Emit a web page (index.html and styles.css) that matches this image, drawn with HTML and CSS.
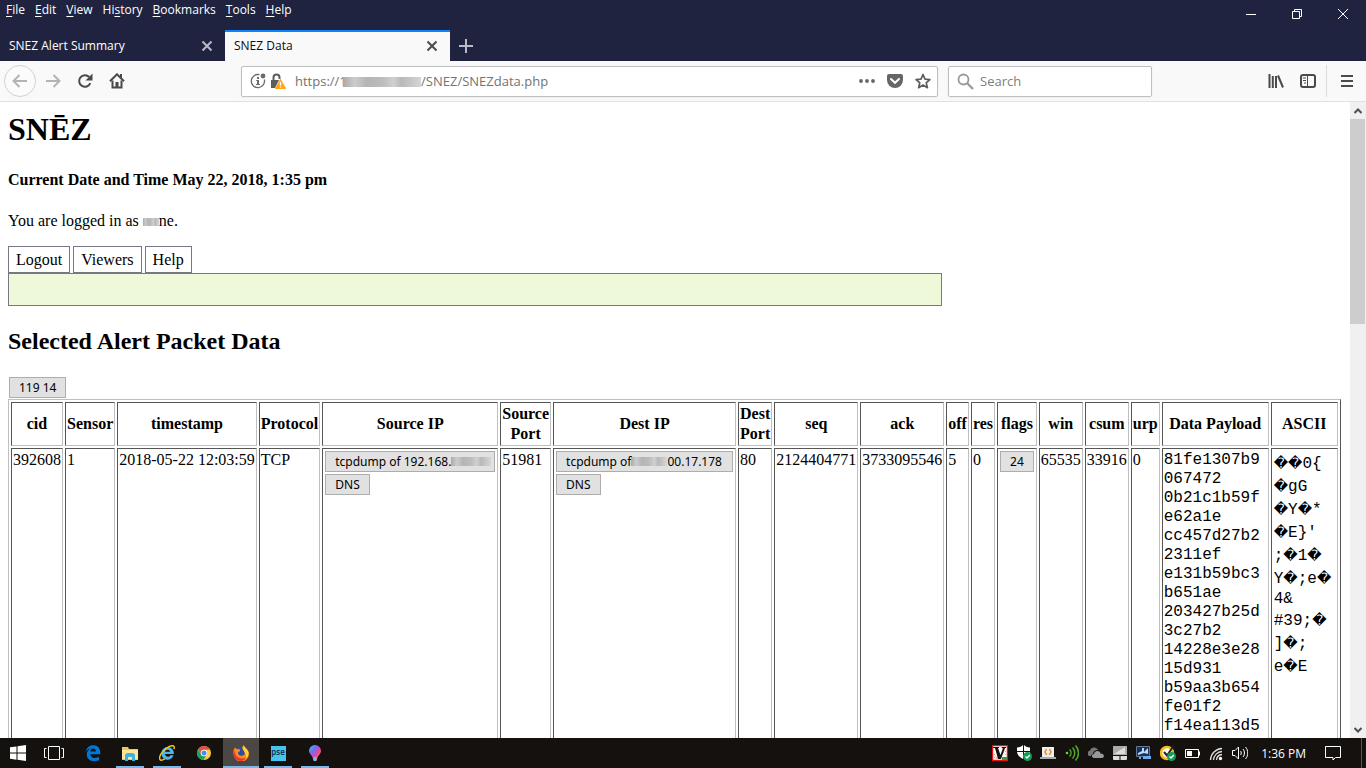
FILE: index.html
```html
<!DOCTYPE html>
<html lang="en">
<head>
    <meta charset="UTF-8"/>
    <meta name="viewport" content="width=device-width, initial-scale=1.0"/>
    <title>SNEZ Data</title>
    <link rel="stylesheet" href="styles.css">
</head>
<body>
<!-- Browser title bar: menu, window buttons, tabs -->
<header class="titlebar">
    <div class="menu-row">
        <nav class="menu">
            <button><u>F</u>ile</button>
            <button><u>E</u>dit</button>
            <button><u>V</u>iew</button>
            <button>Hi<u>s</u>tory</button>
            <button><u>B</u>ookmarks</button>
            <button><u>T</u>ools</button>
            <button><u>H</u>elp</button>
        </nav>
        <div class="window-buttons">
            <button aria-label="Minimize"><svg width="12" height="12" viewBox="0 0 12 12"><path d="M1 6.5h10"/></svg></button>
            <button aria-label="Restore"><svg width="12" height="12" viewBox="0 0 12 12"><path d="M1.500 3.500h7v7h-7zM3.500 3.500v-2h7v7h-2"/></svg></button>
            <button aria-label="Close"><svg width="12" height="12" viewBox="0 0 12 12"><path d="M1 1l10 10M11 1L1 11"/></svg></button>
        </div>
    </div>
    <div class="tabs">
        <div class="tab">
            <button class="tab-title">SNEZ Alert Summary</button>
            <button class="tab-close" aria-label="Close tab"><svg width="12" height="12" viewBox="0 0 12 12"><path d="M1.500 1.500l9 9M10.500 1.500l-9 9"/></svg></button>
        </div>
        <div class="tab active">
            <button class="tab-title">SNEZ Data</button>
            <button class="tab-close" aria-label="Close tab"><svg width="12" height="12" viewBox="0 0 12 12"><path d="M1.500 1.500l9 9M10.500 1.500l-9 9"/></svg></button>
        </div>
        <button class="tab-new" aria-label="New tab"><svg width="14" height="14" viewBox="0 0 14 14"><path d="M7 0v14M0 7h14"/></svg></button>
    </div>
</header>

<!-- Navigation toolbar -->
<div class="toolbar">
    <button class="tool back" aria-label="Back"><svg width="16" height="16" viewBox="0 0 16 16"><path d="M15 8H2M7.500 2L1.500 8l6 6"/></svg></button>
    <button class="tool forward" aria-label="Forward"><svg width="16" height="16" viewBox="0 0 16 16"><path d="M1 8h13M8.500 2l6 6-6 6"/></svg></button>
    <button class="tool" aria-label="Reload"><svg width="16" height="16" viewBox="0 0 16 16"><path d="M13.300 10.200A5.800 5.800 0 1 1 12.200 4"/><path class="solid" d="M15.500 0.500v7h-7z"/></svg></button>
    <button class="tool" aria-label="Home"><svg width="16" height="16" viewBox="0 0 16 16"><path d="M1 8.300L8 1.300l7 7"/><path d="M3.500 7.500v7h9v-7"/><path class="solid" d="M6.500 9h3v5h-3zM11 1h2v4h-2z"/></svg></button>
    <div class="url-box">
        <svg width="16" height="16" viewBox="0 0 16 16"><path d="M9.500 1.700A6.600 6.600 0 1 0 14.300 6.500" fill="none" stroke="#6b6b6b" stroke-width="1.300"/><circle cx="13" cy="3" r="2.400" fill="#6b6b6b"/><path d="M7 4h2v2H7zM6.200 7H9v4h1v1H6v-1h1V8h-.8z" fill="#6b6b6b"/></svg>
        <svg width="16" height="16" viewBox="0 0 16 16"><path d="M3.500 7V4.500a3 3 0 0 1 6 0V6" fill="none" stroke="#5c5c5c" stroke-width="2"/><path d="M1 7h8l-4 8H1z" fill="#5c5c5c"/><path d="M10.500 6.500l5 9h-10z" fill="#ffa412" stroke="#ffa412" stroke-linejoin="round"/><path d="M10.500 9v3.500M10.500 13.500v1.300" stroke="#fff" stroke-width="1.400"/></svg>
        <div class="url-field">
            <input type="text" aria-label="Address" value="https://1&nbsp;&nbsp;&nbsp;&nbsp;&nbsp;&nbsp;&nbsp;&nbsp;&nbsp;&nbsp;&nbsp;&nbsp;&nbsp;&nbsp;&nbsp;&nbsp;&nbsp;&nbsp;&nbsp;&nbsp;&nbsp;&nbsp;/SNEZ/SNEZdata.php">
            <span class="smudge url-smudge"></span>
        </div>
        <button class="page-action" aria-label="Page actions"><svg width="16" height="16" viewBox="0 0 16 16"><circle cx="2" cy="8" r="1.900"/><circle cx="8" cy="8" r="1.900"/><circle cx="14" cy="8" r="1.900"/></svg></button>
        <button class="page-action" aria-label="Save to Pocket"><svg width="16" height="16" viewBox="0 0 16 16"><path d="M2 1h12a2 2 0 0 1 2 2v4a8 8 0 0 1-16 0V3a2 2 0 0 1 2-2z"/><path d="M4 6l4 3.800L12 6" fill="none" stroke="#fff" stroke-width="2" stroke-linecap="round"/></svg></button>
        <button class="page-action" aria-label="Bookmark this page"><svg width="16" height="16" viewBox="0 0 16 16"><path d="M8 1.500l2 4.600 4.900.4-3.700 3.300 1.200 4.900L8 12.100l-4.400 2.600 1.200-4.900L1.100 6.500 6 6.100z" fill="none" stroke="#5c5c5c" stroke-width="1.700" stroke-linejoin="round"/></svg></button>
    </div>
    <div class="search-box">
        <svg width="17" height="17" viewBox="0 0 17 17"><circle cx="6.500" cy="6.500" r="5" fill="none" stroke="#999" stroke-width="1.800"/><path d="M10 10l6 6" stroke="#999" stroke-width="2.200"/></svg>
        <input type="text" placeholder="Search" aria-label="Search">
    </div>
    <div class="toolbar-end">
        <button class="tool" aria-label="Library"><svg width="16" height="16" viewBox="0 0 16 16"><path d="M1.500 1v14M4.800 3v12M8 3v12M10 2.500l5 12"/></svg></button>
        <button class="tool" aria-label="Sidebars"><svg width="16" height="16" viewBox="0 0 16 16"><rect x="1" y="2" width="14" height="12" rx="2"/><path class="thin" d="M7.500 2v12M3 5h3M3 7.500h3M4 10h2"/></svg></button>
        <button class="tool app-menu" aria-label="Open menu"><svg width="16" height="16" viewBox="0 0 16 16"><path d="M2 3h12M2 8h12M2 13h12"/></svg></button>
    </div>
</div>

<!-- Page viewport -->
<div class="viewport">
    <main class="page">
        <h1>SNĒZ</h1>
        <h4>Current Date and Time May 22, 2018, 1:35 pm</h4>
        <p>You are logged in as <span class="smudge user-smudge"></span>ne.</p>
        <nav class="links">
            <a href="#">Logout</a>
            <a href="#">Viewers</a>
            <a href="#">Help</a>
        </nav>
        <div class="message"></div>
        <h2>Selected Alert Packet Data</h2>
        <button class="btn">119 14</button>
        <table>
            <thead>
            <tr>
                <th>cid</th>
                <th>Sensor</th>
                <th>timestamp</th>
                <th>Protocol</th>
                <th>Source IP</th>
                <th>Source<br>Port</th>
                <th>Dest IP</th>
                <th>Dest<br>Port</th>
                <th>seq</th>
                <th>ack</th>
                <th>off</th>
                <th>res</th>
                <th>flags</th>
                <th>win</th>
                <th>csum</th>
                <th>urp</th>
                <th class="payload-head">Data Payload</th>
                <th class="ascii-head">ASCII</th>
            </tr>
            </thead>
            <tbody>
            <tr>
                <td>392608</td>
                <td>1</td>
                <td>2018-05-22 12:03:59</td>
                <td>TCP</td>
                <td>
                    <div class="actions">
                        <button class="btn source">tcpdump of 192.168.<span class="smudge source-smudge"></span></button>
                        <button class="btn">DNS</button>
                    </div>
                </td>
                <td>51981</td>
                <td>
                    <div class="actions">
                        <button class="btn dest">tcpdump of<span class="smudge dest-smudge"></span>00.17.178</button>
                        <button class="btn">DNS</button>
                    </div>
                </td>
                <td>80</td>
                <td>2124404771</td>
                <td>3733095546</td>
                <td>5</td>
                <td>0</td>
                <td><div class="actions"><button class="btn">24</button></div></td>
                <td>65535</td>
                <td>33916</td>
                <td>0</td>
                <td class="payload">81fe1307b9 067472 0b21c1b59f e62a1e cc457d27b2 2311ef e131b59bc3 b651ae 203427b25d 3c27b2 14228e3e28 15d931 b59aa3b654 fe01f2 f14ea113d5</td>
                <td class="ascii"><i>�</i><i>�</i>0{<br><i>�</i>gG<br><i>�</i>Y<i>�</i>*<br><i>�</i>E}'<br>;<i>�</i>1<i>�</i><br>Y<i>�</i>;e<i>�</i><br>4&amp;<br>#39;<i>�</i><br>]<i>�</i>;<br>e<i>�</i>E</td>
            </tr>
            </tbody>
        </table>
    </main>
    <div class="scrollbar">
        <button aria-label="Scroll up"><svg width="8" height="6" viewBox="0 0 8 6"><path d="M.5 5L4 1.500 7.500 5"/></svg></button>
        <div class="track"><div class="thumb"></div></div>
        <button aria-label="Scroll down"><svg width="8" height="6" viewBox="0 0 8 6"><path d="M.5 1L4 4.500 7.500 1"/></svg></button>
    </div>
</div>

<!-- Windows taskbar -->
<footer class="taskbar">
    <div class="system">
        <button aria-label="Start"><svg width="16" height="16" viewBox="0 0 16 16"><path fill="#fff" d="M0 2.300L6.500 1.400v6.200H0zM7.500 1.200L16 0v7.600H7.500zM0 8.500h6.500v6.200L0 13.800zM7.500 8.500H16V16l-8.500-1.200z"/></svg></button>
        <button aria-label="Task View"><svg width="20" height="16" viewBox="0 0 20 16"><path fill="none" stroke="#fff" d="M4.500 1.500h11v13h-11zM2.500 3.500h-2v9h2M17.500 3.500h2v9h-2"/></svg></button>
    </div>
    <div class="apps">
        <button aria-label="Edge"><svg width="16" height="16" viewBox="0 0 16 16"><path fill="#0078d7" d="M.5 7.300C1.300 2.500 4.500.2 8.300.2c4.500 0 7 3.200 7 7.300v1.800H5.200c.2 2.500 2.100 3.600 4.600 3.600 1.800 0 3.100-.5 4.300-1.200v3.200c-1.300.7-3 1.100-5 1.100-4.500 0-7.300-2.600-7.300-6.600 0-2.800 1.500-4.900 4-5.900C3.300 3.600 1.500 5.200.5 7.300zM5.400 6.400h5.400c0-1.900-.9-3-2.600-3-1.600 0-2.600 1.200-2.800 3z"/></svg></button>
        <button class="open" aria-label="File Explorer"><svg width="16" height="16" viewBox="0 0 16 16"><path fill="#f2c65b" d="M0 2h6l1 2h9v11H0z"/><path fill="#ffe69a" d="M0 5h16v9H0z"/><path fill="#3fb1e3" d="M3 9.500L5 8h6l2 1.500V16h-3v-4H6v4H3z"/></svg></button>
        <button class="open" aria-label="Internet Explorer"><svg width="16" height="16" viewBox="0 0 16 16"><path fill="#4cb5ec" d="M8.500 2a6.200 6.200 0 0 1 6.300 7H6c.2 3.200 4.300 3.700 5.200 1.300h3.300C12.500 17 2.500 16 2.500 8.500A6 6 0 0 1 8.500 2zM6 6.800h5.200C10.800 4 6.500 4 6 6.800z"/><path d="M15 4c1.500-5-4-3.500-8-.5C2.500 7-.5 12 1 14.500c.8 1.200 3 .4 4.800-.7" fill="none" stroke="#f5c518" stroke-width="1.500"/></svg></button>
        <button aria-label="Chrome"><svg width="14" height="14" viewBox="0 0 14 14"><circle cx="7" cy="7" r="7" fill="#ffcd40"/><path fill="#de5246" d="M1 3.400A7 7 0 0 1 13.100 3.700H7A3.300 3.300 0 0 0 4.100 8.600z"/><path fill="#1aa15f" d="M1 3.400A7 7 0 0 0 6.500 14l3.300-5.300A3.300 3.300 0 0 1 4.100 8.600z"/><circle cx="7" cy="7" r="3.200" fill="#fff"/><circle cx="7" cy="7" r="2.500" fill="#4c8bf5"/></svg></button>
        <button class="open current" aria-label="Firefox"><svg width="16" height="16" viewBox="0 0 16 16"><circle cx="8.500" cy="8" r="6.500" fill="#244fa3"/><path fill="#ff8a16" d="M2 2.500l2 1.800C6 3.500 7.300 4.500 7 6L5 7.500c0 3 3 4 5.500 2.800C13 9 11 5 9 3.500 9 1 11 0 11 0c0 2.500 5 4 5 8.500a7.600 7.600 0 0 1-15.500.5C0 6 1 4 2 2.500z"/><path fill="#ffd43a" d="M11 .5c0 2.500 4.500 4 4.500 8 0 2.500-1.500 4.500-3 5.500 1-3 .5-5-1-7C10 5 9.500 3 11 .5z"/><path fill="#e8313b" d="M2 4C1 9 3 13 9 13.500c2 0 3.500-.5 4.500-1.500a7 7 0 0 1-5.500 4A7.600 7.600 0 0 1 .5 9z"/></svg></button>
        <button class="open" aria-label="Photoshop Elements"><span class="pse">pse</span></button>
        <button class="open" aria-label="Paint 3D"><svg width="12" height="16" viewBox="0 0 12 16"><defs><linearGradient id="drop" x1="0" y1="0" x2="1" y2="1"><stop offset="0" stop-color="#22d3ee"/><stop offset=".35" stop-color="#7b68ee"/><stop offset=".6" stop-color="#e0479e"/><stop offset="1" stop-color="#ff9f43"/></linearGradient></defs><path fill="url(#drop)" d="M6 0a6 6 0 0 1 6 6c0 3-4 4.500-4 9a2 1 0 0 1-4 0c0-4.500-4-6-4-9a6 6 0 0 1 6-6z"/><path fill="#5cc8f2" d="M4.500 12h3L7 16H5z"/></svg></button>
    </div>
    <div class="tray">
        <button aria-label="VirusScan"><svg width="16" height="16" viewBox="0 0 16 16"><path fill="#fff" stroke="#e11" stroke-width="1.500" d="M.5.500h15v15H.5z"/><path d="M2 9l4 5M2 12l3 2M9 2l5 5M10 6l4 4" stroke="#d66" stroke-dasharray="1 1"/><path fill="#111" d="M1 2h6v1H6l2.500 7L11 3h-1V2h4v1h-1L9 14H6L3 3H1z"/><path fill="#2fa33a" d="M10 12h5v3h-5z"/></svg></button>
        <button aria-label="Windows Defender"><svg width="16" height="16" viewBox="0 0 16 16"><path fill="#fff" d="M7 0v6H1V2.500C4 2.500 5.500 1.500 7 0zM8 0c1.500 1.500 3 2.500 6 2.500V6H8zM1 7h6v7C3.500 12 1.300 10 1 7zM8 7h6c-.3 3-2.500 5-6 7z"/><circle cx="11.500" cy="11.500" r="4.500" fill="#159c56"/><path d="M9.500 11.500l1.500 1.500 2.800-3" fill="none" stroke="#fff" stroke-width="1.300"/></svg></button>
        <button aria-label="Updater"><svg width="16" height="16" viewBox="0 0 16 16"><path fill="#eee" d="M2 2h12v10H2z"/><path fill="#aaa" d="M0 12h16v2H0z"/><path d="M7 4.500c-2.500.5-2.500 4 0 5M9 4.500c2.500.5 2.500 4 0 5" fill="none" stroke="#f28a1c" stroke-width="1.500"/></svg></button>
        <button aria-label="Signal"><svg width="14" height="16" viewBox="0 0 14 16"><circle cx="2" cy="8" r="1.300" fill="#8bc53f"/><path d="M4.500 4.500c2 2 2 5 0 7M7.500 2.500c3 3 3 8 0 11M10.500.500c4 4.500 4 10.500 0 15" fill="none" stroke="#54a829" stroke-width="1.500"/></svg></button>
        <button aria-label="OneDrive"><svg width="16" height="16" viewBox="0 0 16 16"><path fill="#777" d="M1 11a3 3 0 0 1 1-5.500C3 2 8 1 10 5c-3 0-5 1.500-5 4-1.500.3-2 1-2 2z"/><path fill="#999" d="M6 13c-3-.5-2.500-4 0-4 .5-3.500 5.500-4 6.500-.5 4 0 4.500 4 1.500 4.500z"/></svg></button>
        <button aria-label="Touchpad"><svg width="14" height="16" viewBox="0 0 14 16"><path fill="#aaa" d="M0 1h14v9H0z"/><path fill="#ddd" d="M1 9l11-7v7zM0 11h6.500v4H1a1 1 0 0 1-1-1zM7.500 11H14v3a1 1 0 0 1-1 1H7.500z"/></svg></button>
        <button aria-label="Network"><svg width="16" height="16" viewBox="0 0 16 16"><path fill="#16325c" stroke="#68788e" d="M.5 1.500h13v10H.5z"/><path fill="#b9d7ff" d="M2 8l4-2V3h2v4l4-4v6L8 8l-6 2z"/><path fill="#6cabea" d="M7 11h8v3H7zM3 12h2v2H3z"/></svg></button>
        <button aria-label="Norton"><svg width="16" height="16" viewBox="0 0 16 16"><circle cx="7" cy="8" r="6" fill="#fff" stroke="#f9b916" stroke-width="2.500"/><path d="M4 7l3 3.500L13.500 1" fill="none" stroke="#222" stroke-width="2"/><circle cx="11.500" cy="11.500" r="4.500" fill="#159c56"/><path d="M9.500 11.500l1.500 1.500 2.800-3" fill="none" stroke="#fff" stroke-width="1.300"/></svg></button>
        <button aria-label="Battery"><svg width="15" height="16" viewBox="0 0 15 16"><path d="M.5 4.500h13v8H.5z" fill="none" stroke="#fff"/><path fill="#fff" d="M2 6h5v5H2zM14 6.500h1v4h-1z"/></svg></button>
        <button aria-label="Wi-Fi"><svg width="14" height="16" viewBox="0 0 14 16"><path d="M1.500 15A12 12 0 0 1 13 3.500M4.500 15A9 9 0 0 1 13 6.500M7.500 15A6 6 0 0 1 13 9.500" fill="none" stroke="#ddd" stroke-width="1.300"/><circle cx="11.500" cy="13.500" r="1.700" fill="#fff"/></svg></button>
        <button aria-label="Volume"><svg width="16" height="16" viewBox="0 0 16 16"><path d="M.5 5.500h2.500L6.500 2v12L3 10.500H.5zM8.500 6c1 1 1 3 0 4M11 4c2 2.300 2 5.700 0 8M13.500 2c3 3.500 3 8.500 0 12" fill="none" stroke="#fff"/></svg></button>
        <time>1:36 PM</time>
        <button class="notify" aria-label="Notifications"><svg width="16" height="16" viewBox="0 0 16 16"><path d="M.5 1.500h15v11h-5L8 15v-2.500H.5z" fill="none" stroke="#fff"/></svg></button>
    </div>
</footer>
</body>
</html>
```
FILE: styles.css
```css
:root {
    --ui-font: "Open Sans", "Noto Sans", sans-serif;
    --page-font: "Liberation Serif", "Times New Roman", serif;
    --title-bg: #202340;
    --toolbar-bg: #f9f9fa;
    --icon: #4a4a4b;
    --accent: #0a84ff;
    --task-open: #76b9ed;
}

* {
    box-sizing: border-box;
}

body {
    margin: 0;
    height: 100vh;
    display: flex;
    flex-direction: column;
    overflow: hidden;
    background: #fff;
    color: #000;
    font-family: var(--ui-font);
    font-size: 12px;
}

button,
input {
    font: inherit;
    color: inherit;
    margin: 0;
    padding: 0;
    border: 0;
    background: none;
}

svg {
    display: block;
    flex: none;
}

/* Title bar */
.titlebar {
    flex: none;
    background: var(--title-bg);
    color: #fff;
}

.menu-row {
    display: flex;
    justify-content: space-between;
    height: 30px;
}

.menu {
    display: flex;
    align-items: flex-start;
    gap: 10px;
    padding: 2px 6px;
    line-height: 16px;
}

.menu u {
    text-underline-offset: 2px;
}

.window-buttons {
    display: flex;
}

.window-buttons button {
    width: 46px;
    height: 28px;
    display: grid;
    place-items: center;
}

.window-buttons path {
    fill: none;
    stroke: #fff;
}

/* Tabs */
.tabs {
    display: flex;
    height: 31px;
}

.tab {
    width: 225px;
    display: flex;
    align-items: center;
    justify-content: space-between;
    padding: 0 12px 0 9px;
}

.tab.active {
    background: var(--toolbar-bg);
    color: #0c0c0d;
    box-shadow: inset 0 2px var(--accent);
}

.tab-close path,
.tab-new path {
    fill: none;
    stroke: #b9bac6;
    stroke-width: 2;
}

.tab.active .tab-close path {
    stroke: #4a4a4b;
}

.tab-new {
    padding: 0 9px;
}

/* Toolbar */
.toolbar {
    flex: none;
    display: flex;
    align-items: center;
    height: 41px;
    padding: 0 4px;
    background: var(--toolbar-bg);
    border-bottom: 1px solid #e1e1e2;
}

.tool {
    width: 32px;
    height: 32px;
    display: grid;
    place-items: center;
}

.tool path,
.tool rect {
    fill: none;
    stroke: var(--icon);
    stroke-width: 2;
}

.tool .solid {
    fill: var(--icon);
    stroke: none;
}

.tool .thin {
    stroke-width: 1;
}

.back {
    margin-right: 1px;
    border: 1px solid #d2d2d3;
    border-radius: 50%;
    background: #fbfbfb;
}

.back path,
.forward path {
    stroke: #b3b3b4;
}

.url-box,
.search-box {
    display: flex;
    align-items: center;
    height: 31px;
    background: #fff;
    border: 1px solid #bfbfc0;
    border-radius: 2px;
    box-shadow: 0 1px 3px rgba(0, 0, 0, 0.05);
    font-size: 13px;
    color: #737373;
}

.url-box {
    flex: 1;
    gap: 4px;
    margin-left: 108px;
    padding: 0 2px 0 8px;
}

.url-field {
    position: relative;
    flex: 1;
    margin-left: 5px;
}

.url-field input {
    width: 100%;
}

.smudge {
    display: inline-block;
    background: linear-gradient(90deg, #aaa, #ccc 15%, #b5b5b5 30%, #bcbcbc 50%, #d0d0d0 65%, #b8b8b8 75%, #d6d6d6);
}

.url-smudge {
    position: absolute;
    left: 48px;
    top: 5px;
    width: 78px;
    height: 10px;
}

.page-action {
    width: 24px;
    display: grid;
    place-items: center;
}

.page-action svg {
    fill: #666;
}

.search-box {
    width: 204px;
    margin-left: 10px;
    gap: 6px;
    padding: 0 8px;
}

.search-box input {
    flex: 1;
    min-width: 0;
}

.search-box input::placeholder {
    color: #7d7d7d;
    opacity: 1;
}

.toolbar-end {
    display: flex;
    margin-left: 108px;
}

.app-menu {
    width: 36px;
    padding-left: 4px;
    margin-left: 2px;
    border-left: 1px solid #dcdcdd;
}

/* Viewport with its scrollbar */
.viewport {
    flex: 1;
    min-height: 0;
    display: flex;
}

.page {
    flex: 1;
    min-width: 0;
    overflow: hidden;
    padding: 9px 8px 0;
    font-family: var(--page-font);
    font-size: 16px;
    line-height: 18px;
}

.scrollbar {
    width: 16px;
    display: flex;
    flex-direction: column;
    background: #f0f0f0;
}

.scrollbar button {
    height: 17px;
    display: grid;
    place-items: center;
}

.scrollbar path {
    fill: none;
    stroke: #505050;
    stroke-width: 2;
}

.track {
    flex: 1;
}

.thumb {
    height: 34%;
    margin-right: 1px;
    background: #cdcdcd;
}

/* Page contents */
h1 {
    margin: 0;
    font-size: 32px;
    line-height: 37px;
}

h4 {
    margin: 23px 0;
    font-size: 16px;
}

p {
    margin: 0 0 16px;
}

.user-smudge {
    width: 16px;
    height: 8px;
}

.links {
    display: flex;
    gap: 3px;
}

.links a {
    height: 27px;
    padding: 2px 7px;
    border: 1px solid #778;
    line-height: 22px;
    color: #000;
    text-decoration: none;
}

.message {
    width: 70%;
    height: 33px;
    border: 1px solid #778;
    background: #eef9da;
}

h2 {
    margin: 22px 0;
    font-size: 24px;
    line-height: 27px;
}

.btn {
    display: block;
    height: 21px;
    padding: 0 9px;
    margin-left: 1px;
    border: 1px solid #adadad;
    background: #e1e1e1;
    font-family: "Noto Sans", sans-serif;
    font-size: 12px;
    line-height: 19px;
    white-space: nowrap;
}

table {
    margin-top: 1px;
    border: 1px solid;
    border-color: #bfbfbf #555 #555 #bfbfbf;
    border-spacing: 2px;
    line-height: 20px;
}

th,
td {
    padding: 1px;
    border: 1px solid;
    border-color: #555 #bfbfbf #bfbfbf #555;
    white-space: nowrap;
}

td {
    height: 320px;
    vertical-align: top;
}

.actions {
    display: flex;
    flex-direction: column;
    align-items: flex-start;
    gap: 2px;
    padding: 1px 1px 0 0;
}

.source {
    width: 170px;
    text-align: left;
}

.dest {
    width: 177px;
    text-align: left;
}

.source-smudge {
    width: 40px;
    height: 9px;
}

.dest-smudge {
    width: 36px;
    height: 9px;
}

.payload-head {
    width: 107px;
}

.ascii-head {
    width: 67px;
}

.payload,
.ascii {
    font-family: "Liberation Mono", "Courier New", monospace;
    line-height: 19px;
}

.payload {
    padding-top: 2px;
    white-space: normal;
    overflow-wrap: anywhere;
}

.ascii {
    padding: 3px 1px 1px 2px;
}

.ascii i {
    font-family: "DejaVu Sans", sans-serif;
    font-size: 14px;
    font-style: normal;
    line-height: 23px;
}

/* Taskbar */
.taskbar {
    flex: none;
    display: flex;
    height: 30px;
    background: #14110f;
    color: #fff;
}

.taskbar button {
    width: 36px;
    display: grid;
    place-items: center;
}

.system,
.apps {
    display: flex;
}

.apps {
    gap: 1px;
    margin-left: 3px;
}

.open {
    background: linear-gradient(var(--task-open), var(--task-open)) bottom / 28px 2px no-repeat;
}

.taskbar .current {
    background-color: #4a4744;
    background-size: 100% 2px;
}

.pse {
    width: 15px;
    height: 15px;
    background: #46c3ee;
    color: #0b2b45;
    font-size: 8px;
    font-weight: 600;
    line-height: 12px;
}

.tray {
    display: flex;
    align-items: center;
    margin-left: auto;
    margin-right: 4px;
    padding-right: 10px;
    border-right: 1px solid #555;
}

.tray button {
    width: 24px;
}

.tray time {
    padding: 0 9px;
}

.tray .notify {
    width: 36px;
}
```
